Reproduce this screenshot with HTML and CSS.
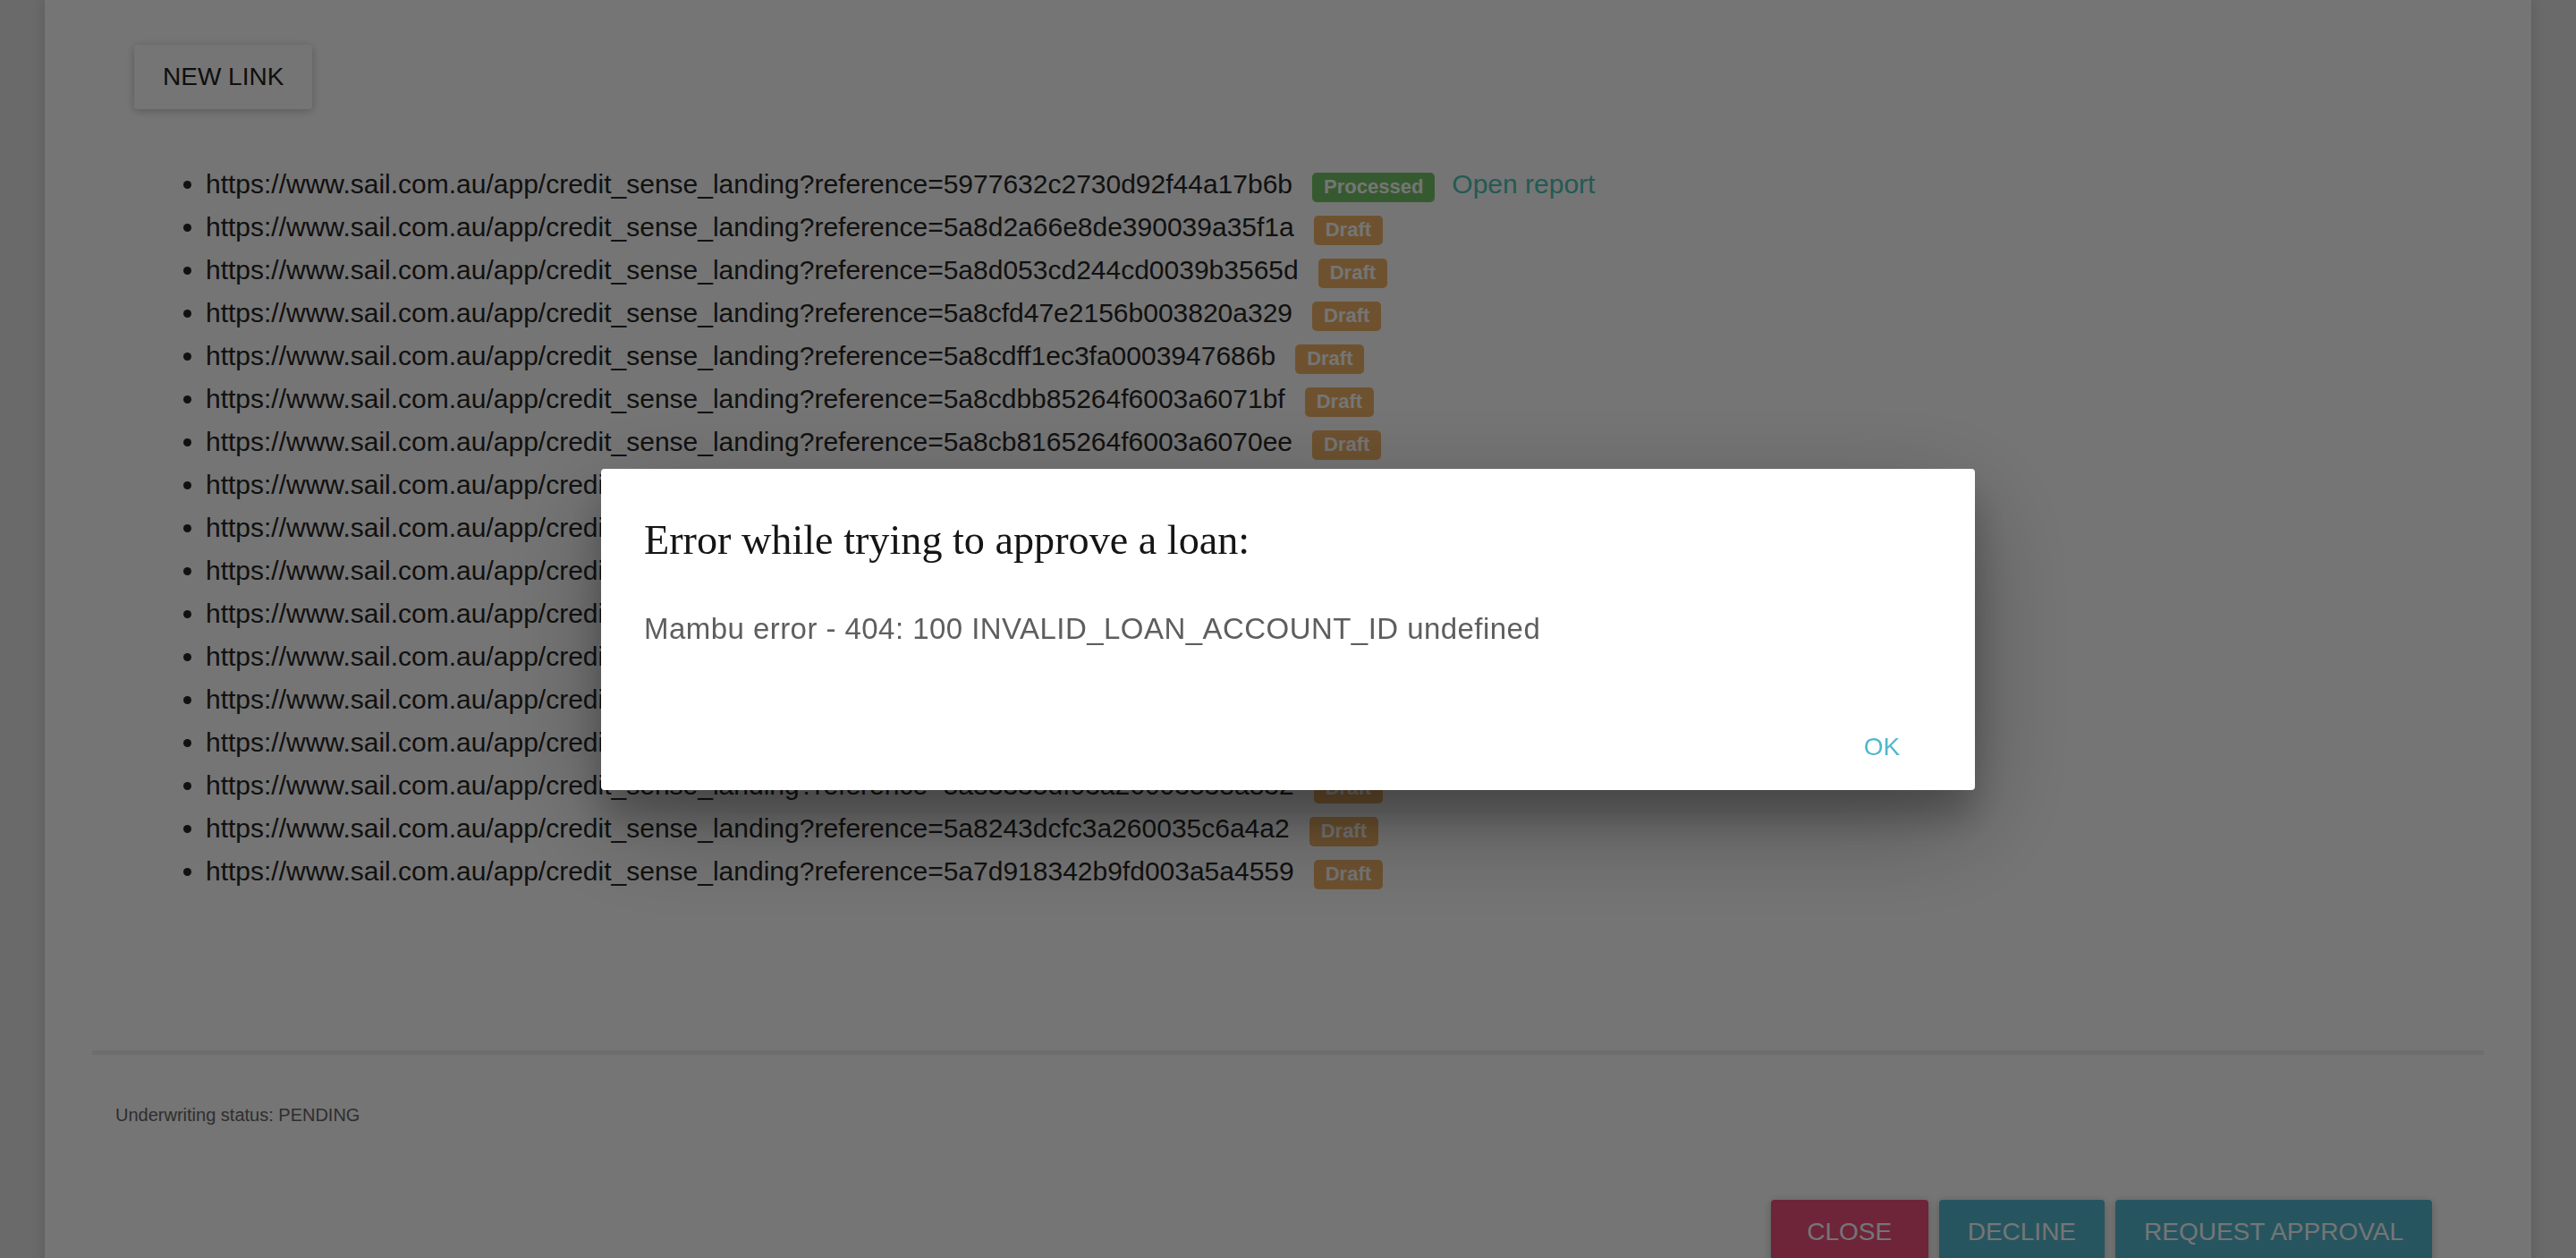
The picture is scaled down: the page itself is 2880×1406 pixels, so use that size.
FILE: index.html
```html
<!DOCTYPE html>
<html lang="en">
<head>
<meta charset="utf-8">
<title>Credit sense links</title>
<link rel="stylesheet" href="styles.css">
</head>
<body>
<div class="page">
  <div class="card">
    <div class="content">
      <button class="btn-raised btn-new">New link</button>
      <ul class="links">
        <li><span class="url">https://www.sail.com.au/app/credit_sense_landing?reference=5977632c2730d92f44a17b6b</span><span class="label label-success">Processed</span><a class="report" href="#">Open report</a></li>
        <li><span class="url">https://www.sail.com.au/app/credit_sense_landing?reference=5a8d2a66e8de390039a35f1a</span><span class="label label-draft">Draft</span></li>
        <li><span class="url">https://www.sail.com.au/app/credit_sense_landing?reference=5a8d053cd244cd0039b3565d</span><span class="label label-draft">Draft</span></li>
        <li><span class="url">https://www.sail.com.au/app/credit_sense_landing?reference=5a8cfd47e2156b003820a329</span><span class="label label-draft">Draft</span></li>
        <li><span class="url">https://www.sail.com.au/app/credit_sense_landing?reference=5a8cdff1ec3fa0003947686b</span><span class="label label-draft">Draft</span></li>
        <li><span class="url">https://www.sail.com.au/app/credit_sense_landing?reference=5a8cdbb85264f6003a6071bf</span><span class="label label-draft">Draft</span></li>
        <li><span class="url">https://www.sail.com.au/app/credit_sense_landing?reference=5a8cb8165264f6003a6070ee</span><span class="label label-draft">Draft</span></li>
        <li><span class="url">https://www.sail.com.au/app/credit_sense_landing?reference=5a8ca92e5264f6003a606fd1</span><span class="label label-draft">Draft</span></li>
        <li><span class="url">https://www.sail.com.au/app/credit_sense_landing?reference=5a8c9f7e5264f6003a606e83</span><span class="label label-draft">Draft</span></li>
        <li><span class="url">https://www.sail.com.au/app/credit_sense_landing?reference=5a8c8b415264f6003a606d2c</span><span class="label label-draft">Draft</span></li>
        <li><span class="url">https://www.sail.com.au/app/credit_sense_landing?reference=5a8b6f0de2156b003820a1f4</span><span class="label label-draft">Draft</span></li>
        <li><span class="url">https://www.sail.com.au/app/credit_sense_landing?reference=5a8a4c23d244cd0039b35e90</span><span class="label label-draft">Draft</span></li>
        <li><span class="url">https://www.sail.com.au/app/credit_sense_landing?reference=5a89e1b7ec3fa00039475b12</span><span class="label label-draft">Draft</span></li>
        <li><span class="url">https://www.sail.com.au/app/credit_sense_landing?reference=5a8654a0fc3a260035c6b07d</span><span class="label label-draft">Draft</span></li>
        <li><span class="url">https://www.sail.com.au/app/credit_sense_landing?reference=5a83335df03a26003538a832</span><span class="label label-draft">Draft</span></li>
        <li><span class="url">https://www.sail.com.au/app/credit_sense_landing?reference=5a8243dcfc3a260035c6a4a2</span><span class="label label-draft">Draft</span></li>
        <li><span class="url">https://www.sail.com.au/app/credit_sense_landing?reference=5a7d918342b9fd003a5a4559</span><span class="label label-draft">Draft</span></li>
      </ul>
    </div>
    <div class="divider"></div>
    <div class="status">Underwriting status: PENDING</div>
    <div class="actions">
      <button class="btn-raised btn-close">Close</button>
      <button class="btn-raised btn-teal">Decline</button>
      <button class="btn-raised btn-teal">Request approval</button>
    </div>
  </div>
</div>

<div class="overlay"></div>

<div class="dialog-layer">
  <div class="dialog" role="dialog">
    <h3 class="dialog-title">Error while trying to approve a loan:</h3>
    <div class="dialog-body">Mambu error - 404: 100 INVALID_LOAN_ACCOUNT_ID undefined</div>
    <div class="dialog-actions">
      <button class="btn-flat">OK</button>
    </div>
  </div>
</div>
</body>
</html>
```

FILE: styles.css
```css
html, body {
  margin: 0;
  height: 100%;
  overflow: hidden;
}

body {
  background: #e6e6e6;
  font-family: "Liberation Sans", Arial, sans-serif;
}

.card {
  margin: 0 50px;
  background: #ffffff;
  box-shadow: 0 0 14px rgba(0, 0, 0, 0.14);
  padding: 50px 0 120px;
}

.content {
  padding: 0 100px;
}

.btn-raised {
  height: 72px;
  min-width: 176px;
  padding: 0 32px;
  border: 0;
  border-radius: 4px;
  font-family: "Liberation Sans", Arial, sans-serif;
  font-size: 28px;
  line-height: 72px;
  text-transform: uppercase;
  box-shadow: 0 2px 12px rgba(0, 0, 0, 0.12), 0 2px 8px rgba(0, 0, 0, 0.12);
}

.btn-new {
  background: #ffffff;
  color: #222222;
}

.links {
  margin: 60px 0 176px;
  padding-left: 80px;
  font-size: 30px;
  line-height: 48px;
  color: #262626;
}

.label {
  display: inline-block;
  margin-left: 22px;
  padding: 5px 13px 6px;
  font-size: 22px;
  font-weight: bold;
  line-height: 1;
  color: #ffffff;
  border-radius: 5px;
  vertical-align: baseline;
}

.label-success {
  background: #76c468;
}

.label-draft {
  background: #efb268;
}

.report {
  margin-left: 19px;
  color: #4cc4b8;
  text-decoration: none;
}

.divider {
  height: 5px;
  margin: 0 53px;
  background: #eeeeee;
}

.status {
  margin: 52px 0 0 79px;
  font-size: 20px;
  line-height: 30px;
  color: #666666;
}

.actions {
  display: flex;
  justify-content: flex-end;
  gap: 12px;
  margin-top: 80px;
  padding-right: 111px;
}

.btn-close {
  background: #ef507c;
  color: #ffffff;
}

.btn-teal {
  background: #53b9d1;
  color: #ffffff;
}

.overlay {
  position: fixed;
  inset: 0;
  background: rgba(0, 0, 0, 0.54);
  z-index: 1000;
}

.dialog-layer {
  position: fixed;
  inset: 0;
  z-index: 1500;
  display: flex;
  align-items: center;
  justify-content: center;
}

.dialog {
  width: 1536px;
  background: #ffffff;
  border-radius: 4px;
  box-shadow: 0 38px 120px rgba(0, 0, 0, 0.3), 0 30px 40px rgba(0, 0, 0, 0.22);
}

.dialog-title {
  margin: 0;
  padding: 48px 48px 40px;
  font-family: "Liberation Serif", "Times New Roman", serif;
  font-size: 46.2px;
  line-height: 64px;
  font-weight: 400;
  color: #151515;
}

.dialog-body {
  padding: 3px 48px 52px;
  font-size: 33px;
  line-height: 48px;
  letter-spacing: 0.45px;
  color: #5e5e5e;
}

.dialog-actions {
  display: flex;
  justify-content: flex-end;
  padding: 20px 16px 12px;
}

.btn-flat {
  height: 72px;
  min-width: 176px;
  padding: 0 32px;
  border: 0;
  border-radius: 4px;
  background: transparent;
  color: #50b8cd;
  font-family: "Liberation Sans", Arial, sans-serif;
  font-size: 28px;
  line-height: 72px;
  text-transform: uppercase;
}
```
